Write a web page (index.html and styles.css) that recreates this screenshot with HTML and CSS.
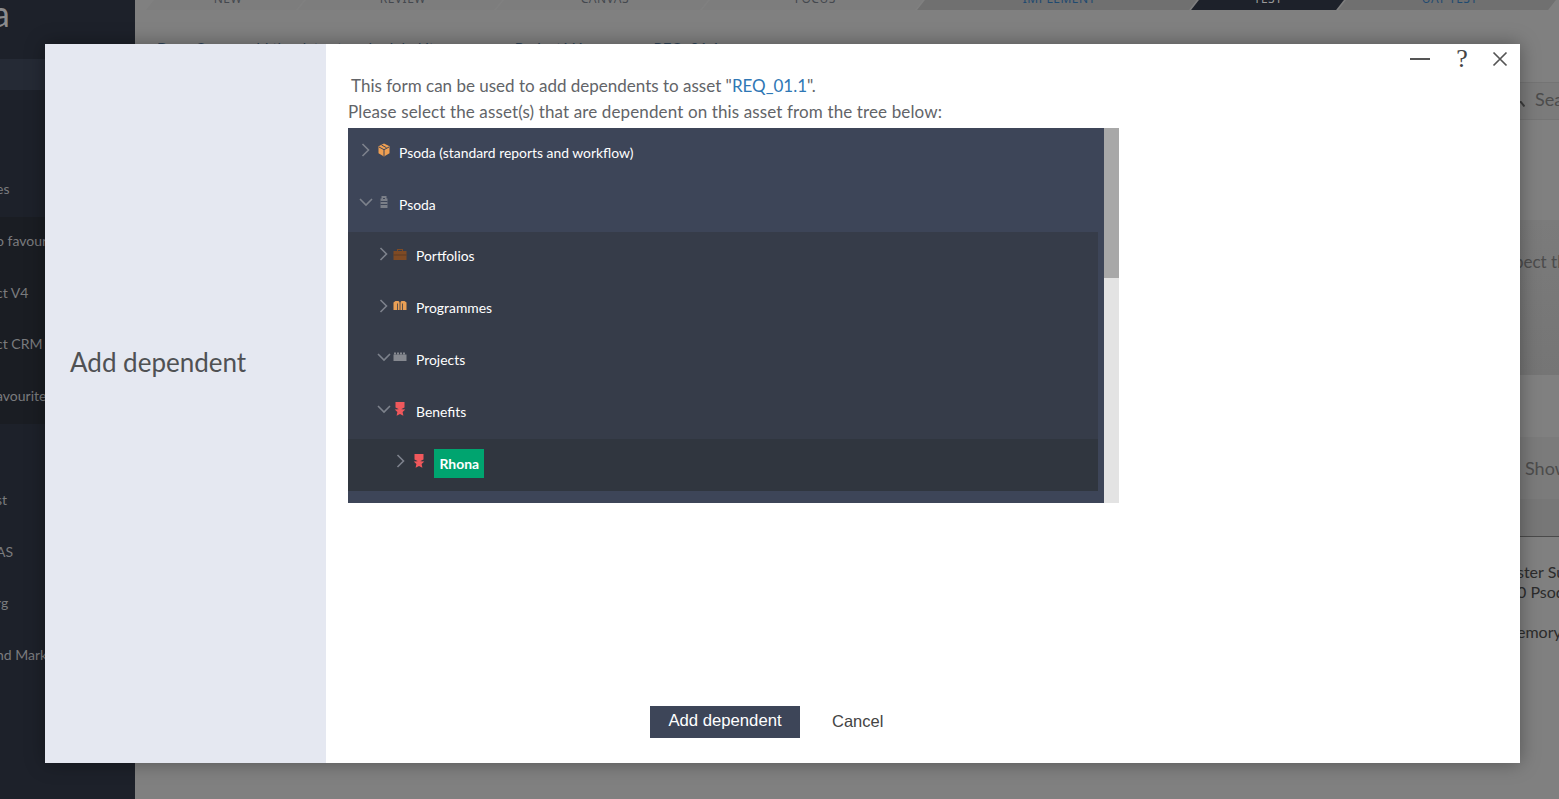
FILE: index.html
```html
<!DOCTYPE html>
<html lang="en">
<head>
<meta charset="utf-8">
<title>Add dependent</title>
<link rel="stylesheet" href="styles.css">
</head>
<body>
<div class="page">
  <aside class="sidebar">
    <div class="logo">a</div>
    <div class="nav-active"></div>
    <div class="nav-spacer"></div>
    <div class="nav-row">es</div>
    <div class="nav-fav">
      <div class="nav-row">o favourites</div>
      <div class="nav-row">ct V4</div>
      <div class="nav-row">ct CRM</div>
      <div class="nav-row">avourites</div>
    </div>
    <div class="nav-row"></div>
    <div class="nav-row">st</div>
    <div class="nav-row">AS</div>
    <div class="nav-row">rg</div>
    <div class="nav-row">nd Marketing</div>
  </aside>
  <main class="main">
    <div class="tabs">
      <div class="tab t1"><span>NEW</span></div>
      <div class="tab t2"><span>REVIEW</span></div>
      <div class="tab t3"><span>CANVAS</span></div>
      <div class="tab t4"><span>FOCUS</span></div>
      <div class="tab t5 dim"><span>IMPLEMENT</span></div>
      <div class="tab t6 now"><span>TEST</span></div>
      <div class="tab t7 dim"><span>UAT TEST</span></div>
    </div>
    <div class="crumb">Does Owner add the dates to scheduled items <span class="c2">Project V4</span><span class="c3">REQ_01.1</span></div>
    <div class="band search">
      <svg class="lens" width="5" height="6" viewBox="0 0 5 6"><path d="M0 0l4.500 5.500" stroke="#3d3d3d" stroke-width="2"/></svg>
      <span>Search</span>
    </div>
    <div class="band b1"><span>pect the</span></div>
    <div class="band b2"></div>
    <div class="band b3"><span>Show</span></div>
    <div class="band b4"></div>
    <div class="band b5"><span>ster Summary</span><span>0 Psoda</span><span class="gap">emory</span></div>
  </main>
</div>

<div class="modal" role="dialog">
  <div class="modal-side"><h1>Add dependent</h1></div>
  <div class="modal-body">
    <div class="controls">
      <svg class="ctl-min" width="20" height="14" viewBox="0 0 20 14"><path d="M0 7h20" stroke="#555" stroke-width="2"/></svg>
      <span class="ctl-help">?</span>
      <svg class="ctl-x" width="16" height="16" viewBox="0 0 16 16"><path d="M1.500 1.500l13 13M14.500 1.500l-13 13" stroke="#555" stroke-width="1.700" fill="none"/></svg>
    </div>
    <p class="intro first">This form can be used to add dependents to asset "<a class="ref">REQ_01.1</a>".</p>
    <p class="intro second">Please select the asset(s) that are dependent on this asset from the tree below:</p>
    <div class="tree-box">
      <div class="tree">
        <div class="row lv0">
          <svg class="chev" width="16" height="16" viewBox="0 0 16 16"><path d="M4.500 2l6 6-6 6"/></svg>
          <svg class="ico" width="20" height="14" viewBox="0 0 20 14"><path fill="#ef9f52" d="M10 .5l5.500 2.800v6.900L10 13.500l-5.500-3.300V3.300z"/><path fill="none" stroke="#3d4558" d="M5 4l5 2.700L15 4M10 6.700V13M7.500 2l5 2.700"/></svg>
          <span class="label">Psoda (standard reports and workflow)</span>
        </div>
        <div class="row lv0">
          <svg class="chev" width="16" height="16" viewBox="0 0 16 16"><path d="M2 5l6 6 6-6"/></svg>
          <svg class="ico" width="20" height="14" viewBox="0 0 20 14"><path fill="#7b7f88" d="M7.500 1h5v2.500h1V13h-7V3.500h1z"/><path stroke="#3d4558" d="M6.500 6.500h7M6.500 9.500h7M9 3.500h2"/></svg>
          <span class="label">Psoda</span>
        </div>
        <div class="nested">
          <div class="nested-inner">
            <div class="row lv1">
              <svg class="chev" width="16" height="16" viewBox="0 0 16 16"><path d="M4.500 2l6 6-6 6"/></svg>
              <svg class="ico" width="20" height="14" viewBox="0 0 20 14"><path fill="#7e4a24" d="M3.500 4h3.500V2h6v2h3.500v9h-13zM8 3v1h4V3z"/><path stroke="#5c3a22" d="M3.500 8h13"/></svg>
              <span class="label">Portfolios</span>
            </div>
            <div class="row lv1">
              <svg class="chev" width="16" height="16" viewBox="0 0 16 16"><path d="M4.500 2l6 6-6 6"/></svg>
              <svg class="ico" width="20" height="14" viewBox="0 0 20 14"><path fill="#e99f55" d="M3.500 3.500l2-1.500h3l1.500 1.500 1.500-1.500h3l2 1.500V11h-13z"/><path stroke="#363c49" d="M7.500 4.500v6.500M12.500 4.500v6.500M10 3v8" stroke-width=".8"/></svg>
              <span class="label">Programmes</span>
            </div>
            <div class="row lv1">
              <svg class="chev" width="16" height="16" viewBox="0 0 16 16"><path d="M2 5l6 6 6-6"/></svg>
              <svg class="ico" width="20" height="14" viewBox="0 0 20 14"><path fill="#85888f" d="M3.500 4.500h13V11h-13z"/><path stroke="#85888f" stroke-width="2" stroke-dasharray="2 1" d="M4 3.500h12"/></svg>
              <span class="label">Projects</span>
            </div>
            <div class="row lv1">
              <svg class="chev" width="16" height="16" viewBox="0 0 16 16"><path d="M2 5l6 6 6-6"/></svg>
              <svg class="ico" width="20" height="14" viewBox="0 0 20 14"><path fill="#f0585c" d="M5.500 0h9v5.500l-3 1.500h-3l-3-1.500z"/><path fill="#f0585c" d="M10 4l1.600 3.200 3.700.4-2.700 2.500.8 3.700-3.400-1.900-3.400 1.900.8-3.700-2.700-2.500 3.700-.4z"/></svg>
              <span class="label">Benefits</span>
            </div>
            <div class="row lv2 row-sel">
              <svg class="chev" width="16" height="16" viewBox="0 0 16 16"><path d="M4.500 2l6 6-6 6"/></svg>
              <svg class="ico" width="20" height="14" viewBox="0 0 20 14"><path fill="#f0585c" d="M5.500 0h9v5.500l-3 1.500h-3l-3-1.500z"/><path fill="#f0585c" d="M10 4l1.600 3.200 3.700.4-2.700 2.500.8 3.700-3.400-1.900-3.400 1.900.8-3.700-2.700-2.500 3.700-.4z"/></svg>
              <span class="label chip">Rhona</span>
            </div>
          </div>
        </div>
      </div>
      <div class="scrollbar"><div class="thumb"></div></div>
    </div>
    <div class="actions">
      <button class="btn-primary" type="button">Add dependent</button>
      <button class="btn-link" type="button">Cancel</button>
    </div>
  </div>
</div>
</body>
</html>
```
FILE: styles.css
```css
* { box-sizing: border-box; }
html, body { margin: 0; height: 100%; overflow: hidden; }
body { background: #808080; font-family: Lato, sans-serif; }

.page { display: flex; height: 799px; }

.sidebar {
  width: 135px; flex: none; background: #1d212a; color: #7a7b7e;
  font: 14px/47px Lato, sans-serif; white-space: nowrap; overflow: hidden;
}
.logo { height: 59px; margin-left: -8px; font: 36px/26px Lato, sans-serif; color: #8b8b8d; }
.nav-active { height: 31px; background: #252a35; }
.nav-spacer { height: 75px; }
.nav-row { height: 51.800px; text-indent: -4px; }
.nav-fav { background: #1a1d23; }

.main { flex: 1; min-width: 0; overflow: hidden; background: #808080; }

.tabs { display: flex; height: 10px; margin-left: 15px; gap: 2px; }
.tab {
  height: 10px; background: #7d7d7d; transform: skewX(-38deg); overflow: hidden;
  display: flex; justify-content: center; color: #44484e;
  font: 12px/12px "Noto Sans", sans-serif; letter-spacing: .5px;
}
.tab span { display: block; margin-top: -7px; transform: skewX(38deg); }
.t1 { width: 150px; }
.t2 { width: 196px; }
.t3 { width: 204px; }
.t4 { width: 213px; }
.t5 { width: 272px; }
.t6 { width: 145px; }
.t7 { width: 210px; }
.t6 span { margin-left: -4px; }
.dim { background: #707070; color: #1f4a70; }
.now { background: #1d212a; color: #9a9a9a; }

.crumb {
  margin: 28px 0 0 22px; color: #2e4458; white-space: nowrap;
  font: 15px/20px Lato, sans-serif; height: 44px;
}
.c2 { margin-left: 50px; }
.c3 { margin-left: 70px; }

.band { padding-left: 1390px; white-space: nowrap; font: 17px/20px Lato, sans-serif; color: #4c4c4c; }
.search {
  height: 38px; display: flex; align-items: center; padding: 0 0 4px 1385px; background: #7b7b7b;
  border-top: 1px solid #747474; border-bottom: 1px solid #747474; font-size: 18px; margin-bottom: 100px;
}
.lens { flex: none; margin: 10px 10px 0 0; }
.b1 { height: 155px; padding: 32px 0 0 1379px; background: linear-gradient(#7b7b7b, #757575); }
.b2 { height: 62px; }
.b3 { height: 62px; padding-top: 21px; background: #7b7b7b; font-size: 18px; }
.b4 { height: 37px; background: #777; }
.b5 {
  display: flex; flex-direction: column; border-top: 1px solid #4a4a4a; padding: 25px 0 0 1382px;
  font: 16px/20px Lato, sans-serif; color: #2c2c2c;
}
.gap { margin-top: 20px; }

.modal {
  position: absolute; left: 45px; top: 44px; width: 1475px; height: 719px;
  display: flex; background: #fff; box-shadow: 0 0 18px rgba(0, 0, 0, .35);
}
.modal-side {
  width: 281px; flex: none; background: #e5e8f1; display: flex; align-items: center;
  padding: 0 0 84px 25px;
}
.modal-side h1 { margin: 0; font: 400 26px/32px Lato, sans-serif; color: #4f5154; }

.modal-body { flex: 1; display: flex; flex-direction: column; padding: 29px 0 25px 22px; position: relative; }
.controls { position: absolute; right: 12px; top: 0; height: 30px; display: flex; align-items: center; }
.ctl-min { margin-right: 24px; }
.ctl-help { width: 16px; margin-right: 22px; text-align: center; font: 400 26px/30px "Liberation Serif", serif; color: #444; }
.ctl-x { display: block; }

.intro { margin: 0; font: 17px/26px Lato, sans-serif; color: #626468; white-space: nowrap; }
.first { padding-left: 3px; }
.second { letter-spacing: .125px; }
.ref { color: #2f77b5; }

.tree-box { width: 771px; height: 375px; margin-top: 3px; display: flex; overflow: hidden; flex: none; }
.tree { width: 756px; background: #3d4558; overflow: hidden; }
.scrollbar { width: 15px; background: #e3e3e3; }
.thumb { height: 150px; background: #a8a8a8; }

.nested { width: 750px; background: #363c49; }
.nested-inner { display: flex; flex-direction: column; }

.row { height: 52px; display: flex; align-items: center; color: #fff; font: 13.900px/20px Lato, sans-serif; }
.label { margin-top: -3px; }
.lv0 { padding-left: 10px; }
.lv1 { height: 51.750px; padding-left: 27.500px; }
.lv2 { padding-left: 45px; background: #30363f; }
.row-sel { height: 52px; }

.chev { flex: none; margin-top: -8px; fill: none; stroke: #7d828c; stroke-width: 1.600; }
.ico { flex: none; margin: -8px 5px 0 0; }
.lv1 .ico { margin-left: -1.500px; margin-right: 6px; }
.chip {
  background: #00a46f; padding: 4px 6px; width: 50px; height: 29px; line-height: 21px;
  font-weight: 700; margin-left: -0.500px; margin-top: -4px;
}

.actions { margin-top: auto; display: flex; align-items: center; padding-left: 302px; }
.btn-primary {
  width: 150px; height: 32px; border: 0; background: #3d4558; color: #fff;
  font: 16.700px/30px "Liberation Sans", sans-serif; padding: 0 0 2px;
}
.btn-link {
  margin-left: 32px; border: 0; background: none; padding: 0 0 2px; color: #444;
  font: 16.500px/30px "Liberation Sans", sans-serif;
}
```
